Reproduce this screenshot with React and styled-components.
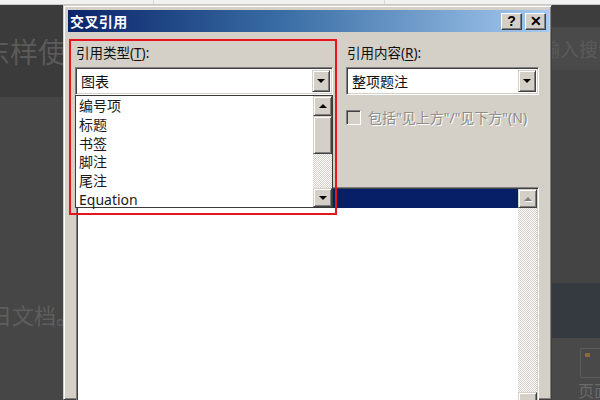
import React from "react";
import styled, { createGlobalStyle } from "styled-components";

const GlobalStyle = createGlobalStyle`
  html, body {
    margin: 0;
    background: #444;
  }
  body {
    font-family: "Noto Sans", "Noto Sans CJK SC", sans-serif;
  }
`;

const FONT = `"Noto Sans", "Noto Sans CJK SC", sans-serif`;

const Page = styled.div`
  width: 600px;
  height: 400px;
  display: flex;
  flex-direction: column;
  overflow: hidden;
  background: #444;
`;

const TopStrip = styled.div`
  height: 4px;
  flex: none;
  display: flex;
  background: #f2f2f2;
  border-bottom: 1px solid #c9c9c9;
`;

const StripCell = styled.div`
  width: ${(p) => p.$w}px;
  border-right: 1px solid #dadada;
`;

const Stage = styled.div`
  flex: 1;
  display: flex;
  min-height: 0;
`;

const Side = styled.div`
  width: ${(p) => p.$w}px;
  flex: none;
  display: flex;
  flex-direction: column;
  overflow: hidden;
`;

const Band = styled.div`
  height: ${(p) => (p.$h ? `${p.$h}px` : "auto")};
  flex: ${(p) => (p.$h ? "none" : 1)};
  background: ${(p) => p.$bg};
  display: flex;
  align-items: center;
  white-space: nowrap;
  overflow: hidden;
`;

const GhostText = styled.span`
  font-family: "Noto Sans CJK SC", sans-serif;
  font-size: ${(p) => p.$size}px;
  color: ${(p) => p.$color || "#5a5a5a"};
  margin-left: ${(p) => p.$x}px;
  margin-top: ${(p) => p.$y || 0}px;
  line-height: 1;
`;

const CardIcon = styled.div`
  position: relative;
  width: 26px;
  height: 28px;
  margin-left: 28px;
  margin-top: 8px;
  border: 1px solid #5c5c5c;
  border-radius: 2px;
  &::before {
    content: "";
    position: absolute;
    left: 4px;
    top: 4px;
    width: 5px;
    height: 4px;
    background: #8a6a3a;
  }
`;

const CardColumn = styled.div`
  display: flex;
  flex-direction: column;
  gap: 4px;
`;

const Dialog = styled.div`
  width: 489px;
  flex: none;
  box-sizing: border-box;
  background: #d4d0c8;
  border: 1px solid #d4d0c8;
  border-right-color: #404040;
  border-bottom-color: #404040;
  box-shadow: inset 1px 1px #fff, inset -1px -1px #808080;
  padding: 4px 2px 0 4px;
  display: flex;
  flex-direction: column;
`;

const TitleBar = styled.div`
  height: 22px;
  flex: none;
  display: flex;
  align-items: center;
  padding: 0 3px 0 2px;
  background: linear-gradient(90deg, #0a246a 0%, #3a6ea5 45%, #a6caf0 100%);
`;

const TitleText = styled.span`
  flex: 1;
  color: #fff;
  font-family: "Noto Sans CJK SC", sans-serif;
  font-weight: 700;
  font-size: 14px;
  letter-spacing: 0.4px;
`;

const TitleButton = styled.div`
  width: 21px;
  height: 17px;
  margin-left: ${(p) => (p.$first ? 0 : 3)}px;
  box-sizing: border-box;
  background: #d4d0c8;
  border: 1px solid #fff;
  border-right-color: #404040;
  border-bottom-color: #404040;
  box-shadow: inset -1px -1px #808080;
  display: flex;
  align-items: center;
  justify-content: center;
  font-family: "Liberation Sans", sans-serif;
  font-weight: 700;
  font-size: 14px;
  color: #000;
  line-height: 1;
`;

const Body = styled.div`
  position: relative;
  padding: 13px 10px 0 7px;
  flex: 1;
`;

const Columns = styled.div`
  display: grid;
  grid-template-columns: 258px 193px;
  column-gap: 13px;
  align-items: start;
`;

const Column = styled.div`
  display: flex;
  flex-direction: column;
`;

const Label = styled.div`
  height: 16px;
  line-height: 16px;
  font-family: ${FONT};
  font-size: 13.5px;
  color: #111;
  padding-left: 1px;
  u {
    text-decoration: underline;
    text-underline-offset: 2px;
  }
`;

const Combo = styled.div`
  margin-top: 6px;
  height: 28px;
  box-sizing: border-box;
  display: flex;
  background: #fff;
  border: 1px solid #808080;
  border-right-color: #fff;
  border-bottom-color: #fff;
  box-shadow: inset 1px 1px #404040, inset -1px -1px #d4d0c8;
  padding: 2px;
`;

const ComboText = styled.div`
  flex: 1;
  display: flex;
  align-items: center;
  padding-left: 3px;
  font-family: ${FONT};
  font-size: 14px;
  color: #111;
`;

const RaisedButton = styled.div`
  width: ${(p) => p.$w || 18}px;
  height: ${(p) => (p.$h ? `${p.$h}px` : "auto")};
  flex: none;
  box-sizing: border-box;
  background: #d4d0c8;
  border: 1px solid #d4d0c8;
  border-right-color: #404040;
  border-bottom-color: #404040;
  box-shadow: inset 1px 1px #fff, inset -1px -1px #808080;
  display: flex;
  align-items: center;
  justify-content: center;
`;

const Arrow = styled.span`
  width: 0;
  height: 0;
  border-left: 4px solid transparent;
  border-right: 4px solid transparent;
  ${(p) =>
    p.$up
      ? `border-bottom: 4px solid ${p.$off ? "#808080" : "#000"};`
      : `border-top: 4px solid ${p.$off ? "#808080" : "#000"};`}
  ${(p) => p.$off && "filter: drop-shadow(1px 1px 0 #fff);"}
`;

const CheckRow = styled.div`
  margin-top: 12px;
  display: flex;
  align-items: center;
  gap: 7px;
`;

const CheckBox = styled.div`
  width: 15px;
  height: 15px;
  box-sizing: border-box;
  background: #d4d0c8;
  border: 1px solid #808080;
  border-right-color: #fff;
  border-bottom-color: #fff;
  box-shadow: inset 1px 1px #404040, inset -1px -1px #d4d0c8;
`;

const DisabledText = styled.span`
  font-family: ${FONT};
  font-size: 14px;
  color: #8c8c8c;
  text-shadow: 1px 1px 0 #fff;
  white-space: nowrap;
`;

const BigList = styled.div`
  margin: 60px 0 0 1px;
  height: 226px;
  box-sizing: border-box;
  display: flex;
  background: #fff;
  border: 1px solid #808080;
  border-right-color: #fff;
  border-bottom-color: #fff;
  box-shadow: inset 1px 1px #404040, inset -1px -1px #d4d0c8;
  padding: 1px;
`;

const ListArea = styled.div`
  flex: 1;
  display: flex;
  flex-direction: column;
`;

const SelectedRow = styled.div`
  height: 19px;
  background: #061f66;
`;

const ScrollBar = styled.div`
  width: ${(p) => p.$w || 19}px;
  flex: none;
  display: flex;
  flex-direction: column;
`;

const Track = styled.div`
  flex: 1;
  background: repeating-conic-gradient(#fff 0 25%, #d4d0c8 0 50%) 0 0 / 2px 2px;
`;

const DropList = styled.div`
  position: absolute;
  left: 7px;
  top: 63px;
  width: 258px;
  height: 113px;
  box-sizing: border-box;
  display: flex;
  background: #fff;
  border: 1px solid #3a3a3a;
`;

const Items = styled.div`
  flex: 1;
  padding-top: 1px;
`;

const Item = styled.div`
  height: 18.8px;
  line-height: 18.8px;
  padding-left: 3px;
  font-family: ${FONT};
  font-size: 14px;
  color: #1a1a1a;
`;

const Highlight = styled.div`
  position: absolute;
  left: 1px;
  top: 7px;
  width: 268px;
  height: 176px;
  box-sizing: border-box;
  border: 2px solid #e8141e;
  pointer-events: none;
`;

const types = ["编号项", "标题", "书签", "脚注", "尾注", "Equation"];

export default function App() {
  return (
    <>
      <GlobalStyle />
      <Page>
        <TopStrip>
          <StripCell $w={153} />
          <StripCell $w={230} />
        </TopStrip>
        <Stage>
          <Side $w={63}>
            <Band $h={92} $bg="#3b3b3b">
              <GhostText $size={28} $x={-18} $y={0}>
                东样使
              </GhostText>
            </Band>
            <Band $h={195} $bg="#464646" />
            <Band $h={44} $bg="#464646">
              <GhostText $size={22} $x={-10} $color="#5e5e5e">
                日文档。
              </GhostText>
            </Band>
            <Band $bg="#464646" />
          </Side>

          <Dialog>
            <TitleBar>
              <TitleText>交叉引用</TitleText>
              <TitleButton $first>?</TitleButton>
              <TitleButton>✕</TitleButton>
            </TitleBar>
            <Body>
              <Columns>
                <Column>
                  <Label>
                    引用类型(<u>T</u>):
                  </Label>
                  <Combo>
                    <ComboText>图表</ComboText>
                    <RaisedButton $w={18}>
                      <Arrow />
                    </RaisedButton>
                  </Combo>
                </Column>
                <Column>
                  <Label>
                    引用内容(<u>R</u>):
                  </Label>
                  <Combo>
                    <ComboText>整项题注</ComboText>
                    <RaisedButton $w={18}>
                      <Arrow />
                    </RaisedButton>
                  </Combo>
                  <CheckRow>
                    <CheckBox />
                    <DisabledText>包括"见上方"/"见下方"(N)</DisabledText>
                  </CheckRow>
                </Column>
              </Columns>

              <BigList>
                <ListArea>
                  <SelectedRow />
                </ListArea>
                <ScrollBar>
                  <RaisedButton $w={19} $h={19}>
                    <Arrow $up $off />
                  </RaisedButton>
                  <Track />
                  <RaisedButton $w={19} $h={19}>
                    <Arrow $off />
                  </RaisedButton>
                </ScrollBar>
              </BigList>

              <DropList>
                <Items>
                  {types.map((t) => (
                    <Item key={t}>{t}</Item>
                  ))}
                </Items>
                <ScrollBar $w={19}>
                  <RaisedButton $w={19} $h={20}>
                    <Arrow $up />
                  </RaisedButton>
                  <RaisedButton $w={19} $h={38} />
                  <Track />
                  <RaisedButton $w={19} $h={19}>
                    <Arrow />
                  </RaisedButton>
                </ScrollBar>
              </DropList>

              <Highlight />
            </Body>
          </Dialog>

          <Side $w={48}>
            <Band $h={22} $bg="#3d3d3d" />
            <Band $h={43} $bg="#4a4a4a">
              <GhostText $size={19} $x={-11}>
                输入搜索
              </GhostText>
            </Band>
            <Band $h={213} $bg="#444" />
            <Band $h={55} $bg="#353940" />
            <Band $bg="#494949">
              <CardColumn>
                <CardIcon />
                <GhostText $size={16} $x={26} $color="#6a6a6a">
                  页面
                </GhostText>
              </CardColumn>
            </Band>
          </Side>
        </Stage>
      </Page>
    </>
  );
}
